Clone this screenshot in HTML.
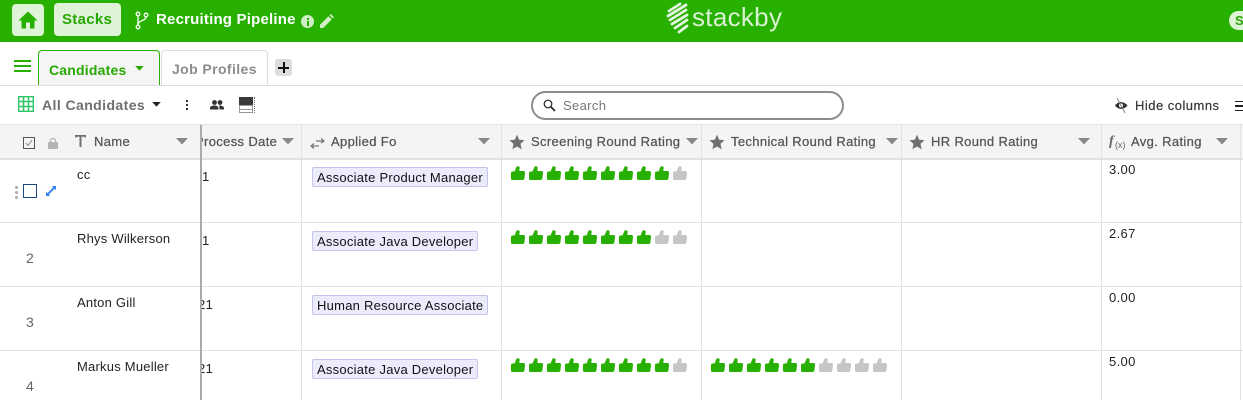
<!DOCTYPE html>
<html><head><meta charset="utf-8"><style>
html,body{margin:0;padding:0;background:#fff}
#p{position:relative;width:1243px;height:400px;overflow:hidden;background:#fff;font-family:"Liberation Sans",sans-serif;color:#222}
#p div,#p span.t,#p svg{position:absolute}
.t{position:absolute;white-space:nowrap;line-height:16px}
.h{font-size:13px;font-weight:400;color:#555;top:134px;letter-spacing:.35px;-webkit-text-stroke:.25px #555}
.c{font-size:13px;color:#222;letter-spacing:.22px}
.d{font-size:13px;color:#222;letter-spacing:.35px}
.n{font-size:14px;color:#666}
.tag{background:#ebebfb;border:1px solid #c6c4ec;border-radius:2px;height:18px;line-height:20px;font-size:13px;color:#111;padding:0 4px;white-space:nowrap;letter-spacing:.25px}
.v{background:#e2e2e2;width:1px;top:125px;height:275px}
.r{background:#e2e2e2;height:1px;left:0;width:1243px}
</style></head><body><div id="p">
<svg width="0" height="0" style="position:absolute"><defs>
<symbol id="th" viewBox="0 0 14 14"><path d="M0 7C0 6 .6 5.500 1.500 5.500H3.500L5.500 .8C6.500-.2 8.800 .2 8.700 2L8.300 5H12.500C13.500 5 14.100 5.800 14 6.800L13.400 12.500C13.200 13.500 12.500 14 11.500 14H1.500C.6 14 0 13.400 0 12.500Z"/></symbol>
<symbol id="st" viewBox="0 0 16 16"><path d="M8 .8l2.200 4.900 5.300.6-4 3.600 1.100 5.300L8 12.500l-4.600 2.700 1.100-5.300-4-3.600 5.300-.6z" fill="#6f6f6f"/></symbol>
<symbol id="ar" viewBox="0 0 12 7"><path d="M0 0h12L6 6.500z"/></symbol>
</defs></svg>

<div style="left:0;top:0;width:1243px;height:42px;background:#27b000"></div>
<div style="left:12px;top:4px;width:32px;height:32px;background:#def3d8;border-radius:4px"></div>
<svg style="left:18px;top:11px" width="20" height="18" viewBox="0 0 20 18"><path fill="#27b000" d="M10 .5L.5 9.500H3.500V17.500H8V11.500H12V17.500H16.500V9.500H19.500Z"/></svg>
<div style="left:54px;top:3px;width:67px;height:33px;background:#def3d8;border-radius:4px"></div>
<span class="t" style="left:62px;top:12px;font-size:15px;font-weight:700;color:#27a800;letter-spacing:.3px">Stacks</span>
<svg style="left:135px;top:11px" width="14" height="19" viewBox="0 0 14 19" fill="none" stroke="#fff" stroke-width="1.300"><circle cx="3" cy="3" r="1.800"/><circle cx="11" cy="4" r="1.800"/><circle cx="3" cy="16" r="1.800"/><path d="M3 5V14M11 6C11 10 4 9 3 13"/></svg>
<span class="t" style="left:156px;top:12px;font-size:15px;font-weight:700;color:#fff;letter-spacing:.2px">Recruiting Pipeline</span>
<div style="left:301px;top:15px;width:13px;height:13px;border-radius:50%;background:#cfeec6"></div>
<div style="left:306.500px;top:18px;width:2px;height:2px;background:#27b000"></div>
<div style="left:306.500px;top:21px;width:2px;height:5px;background:#27b000"></div>
<svg style="left:320px;top:14px" width="14" height="14" viewBox="0 0 14 14"><path fill="#cfeec6" d="M0 14V10.800L8.500 2.300 11.700 5.500 3.200 14ZM9.500 1.300L10.800 0 14 3.200 12.700 4.500Z"/></svg>

<svg style="left:666px;top:2px" width="34" height="32" viewBox="0 0 34 32" stroke="#e4f6e0" stroke-width="2.800" stroke-linecap="round"><path d="M3 9L14 2M2 14L20 3M4 18L20 8M6 22L21 13M9 26L21 18M13 30L21 24"/></svg>
<span class="t" style="left:692px;top:1px;font-size:26px;line-height:32px;font-weight:400;color:#d8f1d2;letter-spacing:.3px">stackby</span>
<div style="left:1229px;top:11px;width:30px;height:19px;border-radius:10px;background:#def3d8"></div>
<span class="t" style="left:1235px;top:13px;font-size:13px;font-weight:700;color:#27a800">S</span>

<div style="left:14px;top:60px;width:17px;height:2px;background:#27b000"></div>
<div style="left:14px;top:65px;width:17px;height:2px;background:#27b000"></div>
<div style="left:14px;top:70px;width:17px;height:2px;background:#27b000"></div>
<div style="left:38px;top:50px;width:122px;height:35px;box-sizing:border-box;border:1.500px solid #27b000;border-bottom:none;border-radius:4px 4px 0 0;background:#f5f5f5"></div>
<span class="t" style="left:49px;top:62px;font-size:14px;font-weight:700;color:#27a800;letter-spacing:.2px;transform-origin:0 0">Candidates</span>
<svg style="left:135px;top:66px;fill:#27a800" width="9" height="5"><use href="#ar" width="9" height="5"/></svg>
<div style="left:161px;top:50px;width:107px;height:35px;box-sizing:border-box;border:1px solid #ddd;border-bottom:none;border-radius:4px 4px 0 0;background:#fff"></div>
<span class="t" style="left:172px;top:61px;font-size:14px;font-weight:700;color:#8c8c8c;letter-spacing:.4px">Job Profiles</span>
<div style="left:275px;top:59px;width:17px;height:17px;border-radius:3px;background:#dcdcdc"></div>
<div style="left:278px;top:67px;width:11px;height:1.500px;background:#111"></div>
<div style="left:283px;top:62px;width:1.500px;height:11px;background:#111"></div>
<div style="left:0;top:85px;width:1243px;height:1px;background:#ddd"></div>

<svg style="left:18px;top:96px" width="16" height="16" viewBox="0 0 16 16"><rect x=".7" y=".7" width="14.600" height="14.600" fill="#fff" stroke="#2fc46a" stroke-width="1.400"/><path stroke="#2fc46a" stroke-width="1.500" d="M5.500 0V16M10.500 0V16M0 5.500H16M0 10.500H16"/></svg>
<span class="t" style="left:42px;top:97px;font-size:14px;font-weight:700;color:#6f6f6f;letter-spacing:.42px">All Candidates</span>
<svg style="left:152px;top:102px;fill:#222" width="9" height="5"><use href="#ar" width="9" height="5"/></svg>
<div style="left:186px;top:100px;width:2px;height:2px;background:#333"></div>
<div style="left:186px;top:104px;width:2px;height:2px;background:#333"></div>
<div style="left:186px;top:108px;width:2px;height:2px;background:#333"></div>
<svg style="left:210px;top:100px" width="14" height="10" viewBox="0 0 14 10" fill="#333"><circle cx="4.500" cy="2.500" r="2.400"/><circle cx="10" cy="2.500" r="2.400"/><path d="M0 9.500V8C0 6 3 5.500 4.500 5.500S8 6 8.500 8V9.500ZM9.500 9.500V8C9.500 7 9 6.200 8.500 5.700 11 5.200 14 6.200 14 8V9.500Z"/></svg>
<div style="left:239px;top:97px;width:14px;height:8px;background:#3a3a3a"></div>
<div style="left:239px;top:105px;width:14px;height:8px;box-sizing:border-box;border:1px solid #999;background:linear-gradient(#999,#999) 0 3px/100% 1px no-repeat #fff"></div>
<div style="left:254px;top:97px;width:0;height:16px;border-left:1px dotted #777"></div>

<div style="left:531px;top:91px;width:313px;height:29px;box-sizing:border-box;border:2px solid #8c8c8c;border-radius:15px;background:#fff"></div>
<svg style="left:543px;top:99px" width="13" height="13" viewBox="0 0 13 13" fill="none" stroke="#222" stroke-width="1.200"><circle cx="5" cy="5" r="3.800"/><path d="M8 8L12 12" stroke-width="1.600"/></svg>
<span class="t" style="left:563px;top:98px;font-size:13px;color:#777;letter-spacing:.35px">Search</span>

<svg style="left:1114px;top:97px" width="15" height="17" viewBox="0 0 15 17"><path d="M1 8.500C4 4 10 4 13.500 8.500 10 13 4 13 1 8.500Z" fill="#333"/><circle cx="7" cy="8.500" r="2" fill="#fff"/><path d="M3 1L11 16" stroke="#777" stroke-width=".8"/></svg>
<span class="t" style="left:1135px;top:98px;font-size:13px;color:#333;letter-spacing:.48px;-webkit-text-stroke:.15px #333">Hide columns</span>
<div style="left:1235px;top:101px;width:9px;height:1px;background:#222"></div>
<div style="left:1235px;top:105px;width:9px;height:2px;background:#222"></div>
<div style="left:1235px;top:110px;width:9px;height:1px;background:#222"></div>

<div style="left:0;top:125px;width:1243px;height:33px;background:#f4f4f4"></div>
<div style="left:0;top:124px;width:1243px;height:1px;background:#e4e4e4"></div>
<div style="left:0;top:158px;width:1243px;height:2px;background:#e0e0e0"></div>
<div class="r" style="top:222px"></div>
<div class="r" style="top:286px"></div>
<div class="r" style="top:350px"></div>
<div class="v" style="left:301px"></div>
<div class="v" style="left:501px"></div>
<div class="v" style="left:701px"></div>
<div class="v" style="left:901px"></div>
<div class="v" style="left:1101px"></div>
<div class="v" style="left:1240px"></div>

<div style="left:23px;top:137px;width:12px;height:12px;box-sizing:border-box;border:1px solid #555;background:#f4f4f4"></div>
<svg style="left:25px;top:139px" width="8" height="8" viewBox="0 0 8 8" fill="none" stroke="#888"><path d="M1 4L3.200 6.500 7 1"/></svg>
<svg style="left:48px;top:137px" width="10" height="12" viewBox="0 0 10 12"><path fill="none" stroke="#b5b5b5" stroke-width="1.300" d="M2.500 5V3.500C2.500 .8 7.500 .8 7.500 3.500V5"/><rect y="5" width="10" height="7" rx="1" fill="#b5b5b5"/></svg>
<svg style="left:75px;top:135px" width="11" height="12" viewBox="0 0 11 12" fill="#6f6f6f"><path d="M0 0H11V2.500H9.500V1.700H6.500V12H4.500V1.700H1.500V2.500H0Z"/></svg>
<span class="t h" style="left:94px">Name</span>
<svg style="left:176px;top:138px;fill:#888" width="12" height="7"><use href="#ar" width="12" height="7"/></svg>

<span class="t h" style="left:195px;clip-path:inset(0 0 0 5px)">Process Date</span>
<svg style="left:282px;top:138px;fill:#888" width="12" height="7"><use href="#ar" width="12" height="7"/></svg>
<svg style="left:310px;top:137px" width="15" height="13" viewBox="0 0 15 13" fill="none" stroke="#777" stroke-width="1.200"><path d="M6 4H14M11 1.500L14 4 11 6M9 9H1M4 6.500L1 9 4 11.500"/></svg>
<span class="t h" style="left:331px">Applied Fo</span>
<svg style="left:478px;top:138px;fill:#888" width="12" height="7"><use href="#ar" width="12" height="7"/></svg>

<svg style="left:509px;top:134px" width="16" height="16"><use href="#st" width="16" height="16"/></svg>
<span class="t h" style="left:531px">Screening Round Rating</span>
<svg style="left:686px;top:138px;fill:#888" width="12" height="7"><use href="#ar" width="12" height="7"/></svg>
<svg style="left:709px;top:134px" width="16" height="16"><use href="#st" width="16" height="16"/></svg>
<span class="t h" style="left:731px">Technical Round Rating</span>
<svg style="left:886px;top:138px;fill:#888" width="12" height="7"><use href="#ar" width="12" height="7"/></svg>
<svg style="left:909px;top:134px" width="16" height="16"><use href="#st" width="16" height="16"/></svg>
<span class="t h" style="left:931px">HR Round Rating</span>
<svg style="left:1078px;top:138px;fill:#888" width="12" height="7"><use href="#ar" width="12" height="7"/></svg>
<span class="t" style="left:1109px;top:134px;font-size:14px;font-family:'Liberation Serif',serif;font-style:italic;font-weight:700;color:#666">f</span>
<span class="t" style="left:1115px;top:137px;font-size:9px;color:#666">(x)</span>
<span class="t h" style="left:1131px">Avg. Rating</span>
<svg style="left:1216px;top:138px;fill:#888" width="12" height="7"><use href="#ar" width="12" height="7"/></svg>

<div style="left:200px;top:125px;width:2px;height:275px;background:#aaa"></div>

<div style="left:15px;top:186px;width:3px;height:3px;border-radius:50%;background:#aaa"></div>
<div style="left:15px;top:191px;width:3px;height:3px;border-radius:50%;background:#aaa"></div>
<div style="left:15px;top:196px;width:3px;height:3px;border-radius:50%;background:#aaa"></div>
<div style="left:23px;top:184px;width:14px;height:14px;box-sizing:border-box;border:1px solid #1c4a80;background:#fff"></div>
<svg style="left:46px;top:186px" width="10" height="10" viewBox="0 0 12 12" fill="#2f80f0"><path d="M12 0V5L10.300 3.300 3.300 10.300 5 12H0V7L1.700 8.700 8.700 1.700 7 0Z"/></svg>

<span class="t n" style="left:26px;top:250px">2</span>
<span class="t n" style="left:26px;top:314px">3</span>
<span class="t n" style="left:26px;top:378px">4</span>

<span class="t c" style="left:77px;top:167px">cc</span>
<span class="t c" style="left:77px;top:231px">Rhys Wilkerson</span>
<span class="t c" style="left:77px;top:295px">Anton Gill</span>
<span class="t c" style="left:77px;top:359px">Markus Mueller</span>

<span class="t d" style="left:202px;top:169px">1</span>
<span class="t d" style="left:202px;top:233px">1</span>
<span class="t d" style="left:198px;top:297px;clip-path:inset(0 0 0 4px)">21</span>
<span class="t d" style="left:198px;top:361px;clip-path:inset(0 0 0 4px)">21</span>

<div class="tag" style="left:312px;top:167px">Associate Product Manager</div>
<div class="tag" style="left:312px;top:231px">Associate Java Developer</div>
<div class="tag" style="left:312px;top:295px">Human Resource Associate</div>
<div class="tag" style="left:312px;top:359px">Associate Java Developer</div>

<svg style="left:511px;top:166px" width="180" height="14" fill="#27b000"><use href="#th" x="0" width="14" height="14"/><use href="#th" x="18" width="14" height="14"/><use href="#th" x="36" width="14" height="14"/><use href="#th" x="54" width="14" height="14"/><use href="#th" x="72" width="14" height="14"/><use href="#th" x="90" width="14" height="14"/><use href="#th" x="108" width="14" height="14"/><use href="#th" x="126" width="14" height="14"/><use href="#th" x="144" width="14" height="14"/><use href="#th" x="162" width="14" height="14" fill="#c6c6c6"/></svg>
<svg style="left:511px;top:230px" width="180" height="14" fill="#27b000"><use href="#th" x="0" width="14" height="14"/><use href="#th" x="18" width="14" height="14"/><use href="#th" x="36" width="14" height="14"/><use href="#th" x="54" width="14" height="14"/><use href="#th" x="72" width="14" height="14"/><use href="#th" x="90" width="14" height="14"/><use href="#th" x="108" width="14" height="14"/><use href="#th" x="126" width="14" height="14"/><use href="#th" x="144" width="14" height="14" fill="#c6c6c6"/><use href="#th" x="162" width="14" height="14" fill="#c6c6c6"/></svg>
<svg style="left:511px;top:358px" width="180" height="14" fill="#27b000"><use href="#th" x="0" width="14" height="14"/><use href="#th" x="18" width="14" height="14"/><use href="#th" x="36" width="14" height="14"/><use href="#th" x="54" width="14" height="14"/><use href="#th" x="72" width="14" height="14"/><use href="#th" x="90" width="14" height="14"/><use href="#th" x="108" width="14" height="14"/><use href="#th" x="126" width="14" height="14"/><use href="#th" x="144" width="14" height="14"/><use href="#th" x="162" width="14" height="14" fill="#c6c6c6"/></svg>
<svg style="left:711px;top:358px" width="180" height="14" fill="#27b000"><use href="#th" x="0" width="14" height="14"/><use href="#th" x="18" width="14" height="14"/><use href="#th" x="36" width="14" height="14"/><use href="#th" x="54" width="14" height="14"/><use href="#th" x="72" width="14" height="14"/><use href="#th" x="90" width="14" height="14"/><use href="#th" x="108" width="14" height="14" fill="#c6c6c6"/><use href="#th" x="126" width="14" height="14" fill="#c6c6c6"/><use href="#th" x="144" width="14" height="14" fill="#c6c6c6"/><use href="#th" x="162" width="14" height="14" fill="#c6c6c6"/></svg>

<span class="t d" style="left:1109px;top:162px">3.00</span>
<span class="t d" style="left:1109px;top:226px">2.67</span>
<span class="t d" style="left:1109px;top:290px">0.00</span>
<span class="t d" style="left:1109px;top:354px">5.00</span>
</div></body></html>
